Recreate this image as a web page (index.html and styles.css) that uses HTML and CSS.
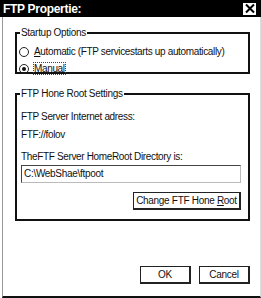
FILE: index.html
```html
<!DOCTYPE html>
<html>
<head>
<meta charset="utf-8">
<link rel="stylesheet" href="styles.css">
</head>
<body>
<div class="window">
  <div class="titlebar">
    <span class="title">FTP Propertie:</span>
    <span class="close"><svg width="12" height="11" viewBox="0 0 12 11"><path d="M2 1.5 L10 9.5 M10 1.5 L2 9.5" stroke="#000" stroke-width="2"/></svg></span>
  </div>
  <div class="content">
    <fieldset class="group group1">
      <legend>Startup Options</legend>
      <div class="radio-row">
        <span class="radio"></span>
        <span class="label"><u>A</u>utomatic (FTP servicestarts up automatically)</span>
      </div>
      <div class="radio-row">
        <span class="radio checked"></span>
        <span class="label focus"><u>M</u>anual</span>
      </div>
    </fieldset>
    <fieldset class="group group2">
      <legend>FTP Hone Root Settings</legend>
      <div class="line">FTP Server Internet adress:</div>
      <div class="line">FTF://folov</div>
      <div class="line third">TheFTF Server HomeRoot Directory is:</div>
      <div class="input">C:\WebShae\ftpoot</div>
      <div class="btn-row">
        <span class="btn change"><span>Change FTF Hone <u>R</u>oot</span></span>
      </div>
    </fieldset>
    <div class="spacer"></div>
    <div class="footer">
      <span class="btn ok"><span>OK</span></span>
      <span class="btn cancel"><span>Cancel</span></span>
    </div>
  </div>
</div>
</body>
</html>
```
FILE: styles.css
```css
html, body {
  margin: 0;
  padding: 0;
  background: #fff;
}
body {
  width: 261px;
  height: 298px;
  overflow: hidden;
  font-family: "Liberation Sans", Arial, sans-serif;
  font-size: 10px;
  color: #111;
}
.window {
  width: 261px;
  height: 298px;
  box-sizing: border-box;
  display: flex;
  flex-direction: column;
}
.titlebar {
  height: 17px;
  background: #000;
  display: flex;
  align-items: center;
  justify-content: space-between;
  padding: 0 5px 0 3px;
  flex-shrink: 0;
}
.title {
  color: #fff;
  font-weight: bold;
  font-size: 12px;
  letter-spacing: -0.3px;
}
.close {
  width: 13px;
  height: 12px;
  background: #fff;
  display: flex;
  align-items: center;
  justify-content: center;
}
.content {
  flex: 1;
  display: flex;
  flex-direction: column;
  margin-left: 2px;
  border-left: 1px solid #999;
  border-bottom: 2px solid #111;
  border-right: 1px solid #ddd;
  padding: 9px 10px 12px 12px;
}
.group {
  margin: 0;
  border: 2px solid #111;
  padding: 0 7px 0 4px;
}
.group legend {
  padding: 0 1px;
  margin-left: -1px;
  line-height: 13px;
  letter-spacing: -0.3px;
}
.group1 {
  height: 48px;
  box-sizing: border-box;
  padding-top: 4px;
}
.radio-row {
  display: flex;
  align-items: center;
  height: 17px;
  white-space: nowrap;
}
.radio {
  width: 8px;
  height: 8px;
  border: 1.5px solid #222;
  border-radius: 50%;
  margin-right: 5px;
  margin-left: -2px;
  position: relative;
  box-sizing: content-box;
  flex-shrink: 0;
}
.radio.checked::after {
  content: "";
  position: absolute;
  left: 2px;
  top: 2px;
  width: 4px;
  height: 4px;
  border-radius: 50%;
  background: #111;
}
.label {
  letter-spacing: -0.35px;
}
.focus {
  outline: 1px dotted #444;
  outline-offset: 0;
}
.group2 {
  margin-top: 13px;
  height: 134px;
  box-sizing: border-box;
  padding-top: 10px;
}
.line {
  height: 13px;
  line-height: 13px;
  margin-bottom: 5px;
  letter-spacing: -0.35px;
  white-space: nowrap;
}
.line.third {
  margin-top: 9px;
  margin-bottom: 2px;
}
.input {
  height: 18px;
  box-sizing: border-box;
  border: 1px solid #444;
  border-right-color: #bbb;
  border-bottom-color: #bbb;
  line-height: 16px;
  padding-left: 2px;
  letter-spacing: -0.3px;
}
.btn-row {
  display: flex;
  justify-content: flex-end;
  margin-top: 9px;
}
.btn {
  height: 18px;
  box-sizing: border-box;
  border: 1px solid #222;
  border-right-width: 2px;
  border-bottom-width: 2px;
  display: flex;
  align-items: center;
  justify-content: center;
  letter-spacing: -0.3px;
  white-space: nowrap;
}
.change {
  width: 108px;
}
.spacer {
  flex: 1;
}
.footer {
  display: flex;
  justify-content: flex-end;
  gap: 8px;
}
.ok, .cancel {
  width: 51px;
}
```
